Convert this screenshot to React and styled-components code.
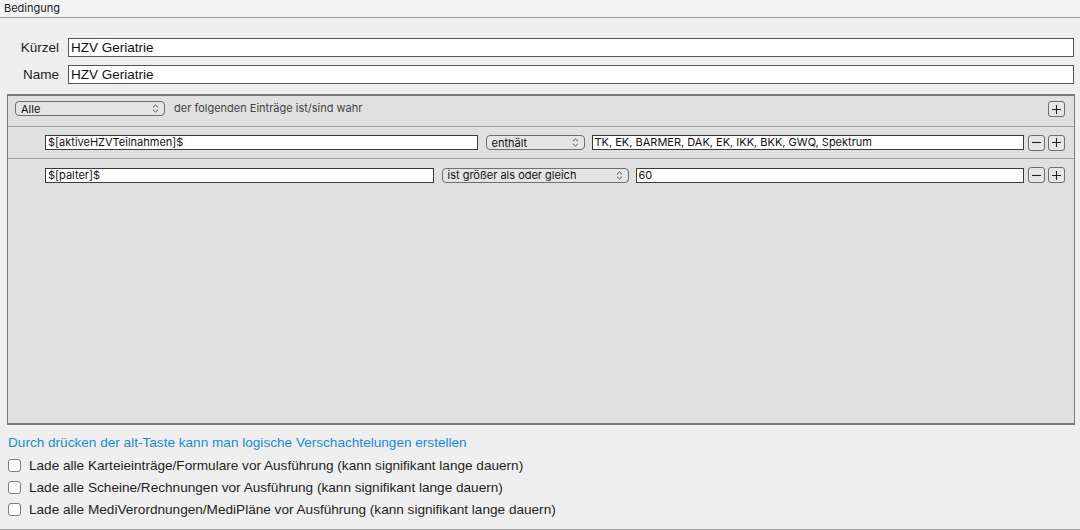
import React from "react";
import styled, { createGlobalStyle } from "styled-components";

const Global = createGlobalStyle`
  html, body { margin: 0; padding: 0; }
  body {
    width: 1080px; height: 530px; overflow: hidden;
    background: #efefef;
    font-family: Inter, "Liberation Sans", Arial, sans-serif;
    color: #1e1e1e;
  }
`;

const Page = styled.div`
  width: 1080px; height: 530px;
  display: flex; flex-direction: column;
  box-sizing: border-box;
  border-bottom: 1px solid #a0a0a0;
`;

const TitleBar = styled.div`
  height: 18px; box-sizing: border-box;
  background: #f4f4f4;
  border-bottom: 1px solid #9a9a9a;
  font-size: 11px; line-height: 17px;
  padding-left: 4px; color: #222;
`;

const Form = styled.div`
  display: flex; flex-direction: column; gap: 8px;
  padding: 20px 6px 0 0;
  font-family: "Liberation Sans", Arial, sans-serif;
`;

const FieldRow = styled.div`
  display: flex; align-items: center; gap: 9px;
`;

const Label = styled.label`
  width: 59px; text-align: right;
  font-size: 13.5px; color: #222;
`;

const TextBox = styled.div`
  flex: 1; height: 19px; box-sizing: border-box;
  background: #fff; border: 1px solid #555;
  font-size: 13.5px; line-height: 17px; padding-left: 2px;
  color: #111;
`;

const Panel = styled.div`
  margin: 10px 5px 0 7px;
  height: 331px; box-sizing: border-box;
  background: #e0e0e0;
  border: 1px solid #7a7a7a;
  border-width: 2px 1px 2px 1px;
  display: flex; flex-direction: column;
`;

const HeaderRow = styled.div`
  height: 31px; box-sizing: border-box;
  border-bottom: 1px solid #a2a2a2;
  display: flex; align-items: flex-start;
  padding: 5px 9px 0 7px;
  font-size: 11px;
`;

const CondRow = styled.div`
  height: 32px; box-sizing: border-box;
  border-bottom: ${(p) => (p.$last ? "none" : "1px solid #a2a2a2")};
  display: flex; align-items: center;
  padding: 0 9px 0 37px;
  font-size: 11px;
`;

const PopUp = styled.div`
  width: ${(p) => p.$w}px; height: 15px; box-sizing: border-box;
  border: 1px solid #6e6e6e; border-radius: 4px;
  background: #e4e4e4;
  display: flex; align-items: center; justify-content: space-between;
  padding: 0 5px 0 5px;
  font-size: 11px; color: #111;
  margin-right: ${(p) => p.$mr || 0}px;
  margin-left: ${(p) => p.$ml || 0}px;
`;

const Hint = styled.span`
  margin-left: 9px; color: #444; font-size: 11px; line-height: 15px;
`;

const Spacer = styled.div` flex: 1; `;

const Field = styled.div`
  flex: 1; height: 15px; box-sizing: border-box;
  background: #fff; border: 1px solid #3a3a3a;
  font-size: 11px; line-height: 13px; padding-left: 2px;
  color: #111; white-space: nowrap; overflow: hidden;
`;

const SquareBtn = styled.div`
  width: 17px; height: 16px; box-sizing: border-box;
  border: 1px solid #6e6e6e; border-radius: 3px;
  background: #e6e6e6;
  display: flex; align-items: center; justify-content: center;
  margin-left: ${(p) => p.$ml || 0}px;
`;

const Footer = styled.div`
  display: flex; flex-direction: column;
  padding: 9px 0 0 8px;
  font-family: "Liberation Sans", Arial, sans-serif;
`;

const Info = styled.div`
  color: #1a8ad4; font-size: 13.6px; line-height: 17px;
  margin-bottom: 3px;
`;

const CheckRow = styled.label`
  display: flex; align-items: center; gap: 8px;
  height: 22px; font-size: 13.6px; color: #1e1e1e;
`;

const Box = styled.span`
  width: 13px; height: 13px; box-sizing: border-box;
  border: 1px solid #7c7c7c; border-radius: 3px; background: #fff;
`;

const Chevrons = () => (
  <svg width="7" height="9" viewBox="0 0 7 9">
    <path d="M1 3.2 L3.5 1 L6 3.2 M1 5.8 L3.5 8 L6 5.8" fill="none" stroke="#555" strokeWidth="1" />
  </svg>
);

const Plus = () => (
  <svg width="11" height="11" viewBox="0 0 11 11">
    <path d="M5.5 1 V10 M1 5.5 H10" stroke="#222" strokeWidth="1.1" />
  </svg>
);

const Minus = () => (
  <svg width="11" height="11" viewBox="0 0 11 11">
    <path d="M1 5.5 H10" stroke="#222" strokeWidth="1.1" />
  </svg>
);

const conditions = [
  { field: "$[aktiveHZVTeilnahmen]$", op: "enthält", w: 99, value: "TK, EK, BARMER, DAK, EK, IKK, BKK, GWQ, Spektrum" },
  { field: "$[palter]$", op: "ist größer als oder gleich", w: 187, value: "60" },
];

const checks = [
  "Lade alle Karteieinträge/Formulare vor Ausführung (kann signifikant lange dauern)",
  "Lade alle Scheine/Rechnungen vor Ausführung (kann signifikant lange dauern)",
  "Lade alle MediVerordnungen/MediPläne vor Ausführung (kann signifikant lange dauern)",
];

export default function App() {
  return (
    <>
      <Global />
      <Page>
        <TitleBar>Bedingung</TitleBar>
        <Form>
          <FieldRow>
            <Label>Kürzel</Label>
            <TextBox>HZV Geriatrie</TextBox>
          </FieldRow>
          <FieldRow>
            <Label>Name</Label>
            <TextBox>HZV Geriatrie</TextBox>
          </FieldRow>
        </Form>
        <Panel>
          <HeaderRow>
            <PopUp $w={150}>
              <span>Alle</span>
              <Chevrons />
            </PopUp>
            <Hint>der folgenden Einträge ist/sind wahr</Hint>
            <Spacer />
            <SquareBtn><Plus /></SquareBtn>
          </HeaderRow>
          {conditions.map((c, i) => (
            <CondRow key={i} $last={i === conditions.length - 1}>
              <Field>{c.field}</Field>
              <PopUp $w={c.w} $ml={8} $mr={7}>
                <span>{c.op}</span>
                <Chevrons />
              </PopUp>
              <Field>{c.value}</Field>
              <SquareBtn $ml={4}><Minus /></SquareBtn>
              <SquareBtn $ml={3}><Plus /></SquareBtn>
            </CondRow>
          ))}
        </Panel>
        <Footer>
          <Info>Durch drücken der alt-Taste kann man logische Verschachtelungen erstellen</Info>
          {checks.map((t) => (
            <CheckRow key={t}>
              <Box />
              <span>{t}</span>
            </CheckRow>
          ))}
        </Footer>
      </Page>
    </>
  );
}
